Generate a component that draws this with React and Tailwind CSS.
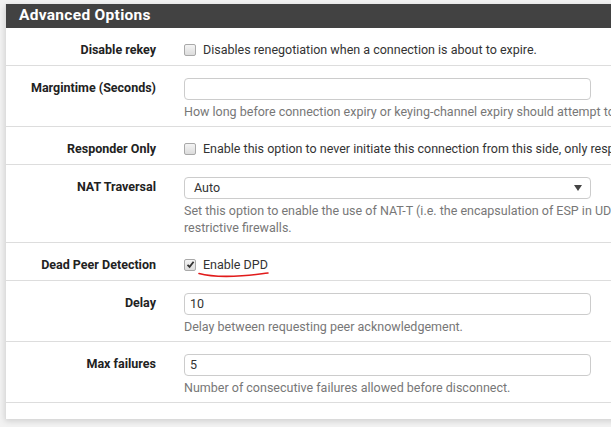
import React from "react";

const font = { fontFamily: "Roboto, 'Liberation Sans', sans-serif" };

const Checkbox = ({ checked }) => (
  <span className="inline-flex items-center justify-center w-[12px] h-[12px] rounded-[2px] border border-[#a9a9a9] bg-gradient-to-b from-[#f4f4f4] to-[#dcdcdc] shrink-0">
    {checked && (
      <svg width="9" height="9" viewBox="0 0 9 9">
        <path d="M1.5 4.8 L3.6 6.9 L7.6 1.8" fill="none" stroke="#333" strokeWidth="1.8" />
      </svg>
    )}
  </span>
);

const Row = ({ label, children, compact }) => (
  <div className={`flex border-b border-[#dddddd] ${compact ? "pt-[13px] pb-[7px]" : "pt-3 pb-[6px]"}`}>
    <div className={`w-[165px] shrink-0 pr-[15px] text-right font-bold text-[12.5px] leading-[17px] text-[#222] ${compact ? "" : "pt-[1px]"}`}>
      {label}
    </div>
    <div className="pl-[13px] flex-1 min-w-0">{children}</div>
  </div>
);

const CheckLine = ({ checked, text, underline }) => (
  <div className="relative flex items-center gap-[7px] text-[12.5px] leading-[17px] text-[#333] whitespace-nowrap">
    <Checkbox checked={checked} />
    <span>{text}</span>
    {underline && (
      <svg className="absolute left-[14px] top-[14px]" width="72" height="8" viewBox="0 0 72 8">
        <path d="M1 3.5 C 12 6.5, 28 6.8, 44 5.8 S 64 3.5, 70 3" fill="none" stroke="#e11b1b" strokeWidth="1.6" strokeLinecap="round" />
      </svg>
    )}
  </div>
);

const TextInput = ({ value }) => (
  <div className="w-[407px] h-[22px] rounded-[4px] border border-[#cccccc] bg-white px-[5px] flex items-center text-[12.5px] text-[#333]">
    {value}
  </div>
);

const Help = ({ children }) => (
  <div className="mt-[3px] text-[12.5px] leading-[17px] text-[#777] whitespace-nowrap">{children}</div>
);

export default function App() {
  return (
    <div className="w-[611px] h-[427px] overflow-hidden bg-[#f2f2f2] pt-[4px] pl-[5px]" style={font}>
      <div className="w-[800px] bg-white border-l border-[#dedede] shadow-[0_2px_6px_rgba(0,0,0,0.15)] pb-[16px]">
        <div className="h-[24px] bg-[#424242] pl-[13px] flex items-center text-white font-bold text-[15.5px] tracking-[0.3px]">
          Advanced Options
        </div>

        <Row label="Disable rekey" compact>
          <CheckLine text="Disables renegotiation when a connection is about to expire." />
        </Row>

        <Row label="Margintime (Seconds)">
          <TextInput value="" />
          <Help>How long before connection expiry or keying-channel expiry should attempt to negotiate a replacement begin.</Help>
        </Row>

        <Row label="Responder Only" compact>
          <CheckLine text="Enable this option to never initiate this connection from this side, only respond to incoming requests." />
        </Row>

        <Row label="NAT Traversal">
          <div className="w-[407px] h-[22px] rounded-[4px] border border-[#cccccc] bg-white pl-[9px] pr-[8px] flex items-center justify-between text-[12.5px] text-[#333]">
            <span>Auto</span>
            <svg width="8" height="6" viewBox="0 0 8 6">
              <path d="M0 0 H8 L4 6 Z" fill="#444" />
            </svg>
          </div>
          <Help>
            Set this option to enable the use of NAT-T (i.e. the encapsulation of ESP in UDP packets) if needed, which can help with clients that are behind
            <br />
            restrictive firewalls.
          </Help>
        </Row>

        <Row label="Dead Peer Detection" compact>
          <CheckLine checked text="Enable DPD" underline />
        </Row>

        <Row label="Delay">
          <TextInput value="10" />
          <Help>Delay between requesting peer acknowledgement.</Help>
        </Row>

        <Row label="Max failures">
          <TextInput value="5" />
          <Help>Number of consecutive failures allowed before disconnect.</Help>
        </Row>
      </div>
    </div>
  );
}
